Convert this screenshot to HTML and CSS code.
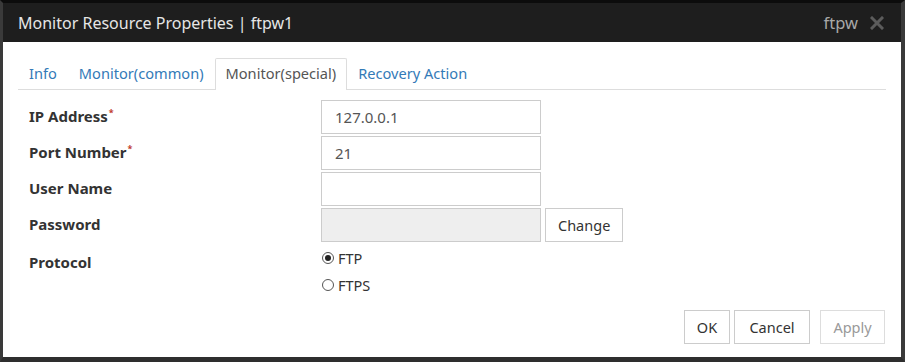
FILE: index.html
```html
<!DOCTYPE html>
<html lang="en">
<head>
    <meta charset="UTF-8">
    <title>Monitor Resource Properties</title>
    <link rel="stylesheet" href="styles.css">
</head>
<body>

<div class="dialog">
    <div class="dialog-header">
        <span class="dialog-title">Monitor Resource Properties | ftpw1</span>
        <span class="dialog-type">ftpw</span>
        <svg class="dialog-close" width="14" height="14" viewBox="0 0 14 14">
            <path d="M2 2 L12 12 M12 2 L2 12" stroke="#5c5c5c" stroke-width="3" stroke-linecap="square"/>
        </svg>
    </div>

    <div class="dialog-body">
        <ul class="tabs">
            <li class="tab">Info</li>
            <li class="tab">Monitor(common)</li>
            <li class="tab active">Monitor(special)</li>
            <li class="tab">Recovery Action</li>
        </ul>

        <div class="form">
            <label class="form-label">IP Address<sup class="req">*</sup></label>
            <div class="form-field"><input type="text" class="text-input" value="127.0.0.1"></div>

            <label class="form-label">Port Number<sup class="req">*</sup></label>
            <div class="form-field"><input type="text" class="text-input" value="21"></div>

            <label class="form-label">User Name</label>
            <div class="form-field"><input type="text" class="text-input" value=""></div>

            <label class="form-label">Password</label>
            <div class="form-field">
                <input type="password" class="text-input disabled" disabled>
                <button class="button">Change</button>
            </div>

            <label class="form-label protocol-label">Protocol</label>
            <div class="radio-group">
                <label class="radio"><span class="radio-dot checked"></span>FTP</label>
                <label class="radio"><span class="radio-dot"></span>FTPS</label>
            </div>
        </div>

        <div class="footer">
            <button class="button ok">OK</button>
            <button class="button cancel">Cancel</button>
            <button class="button apply" disabled>Apply</button>
        </div>
    </div>
</div>

</body>
</html>
```

FILE: styles.css
```css
body {
    margin: 0;
    padding: 0;
    background-color: #333;
    font-family: "Noto Sans", "Liberation Sans", sans-serif;
}
.dialog {
    width: 905px;
    height: 362px;
    box-sizing: border-box;
    border-style: solid;
    border-color: #0c0c0c #3a3a3a #2e2e2e #3a3a3a;
    border-width: 3px 4px 5px 3px;
    background-color: #fff;
    display: flex;
    flex-direction: column;
}
.dialog-header {
    height: 39px;
    background-color: #1e1e1e;
    display: flex;
    align-items: center;
    padding: 0 17px 0 15px;
}
.dialog-title {
    flex: 1;
    color: #e6e6e6;
    font-size: 16px;
}
.dialog-type {
    color: #a8a8a8;
    font-size: 16.5px;
}
.dialog-close {
    margin-left: 12px;
}
.dialog-body {
    flex: 1;
    padding: 16px 15px 0 15px;
    display: flex;
    flex-direction: column;
}
.tabs {
    list-style: none;
    margin: 0;
    padding: 0;
    display: flex;
    border-bottom: 1px solid #ddd;
    height: 31px;
}
.tab {
    padding: 0 10px;
    font-size: 14.6px;
    color: #337ab7;
    line-height: 28px;
    border: 1px solid transparent;
    border-bottom: none;
}
.tab.active {
    color: #555;
    border-color: #ddd;
    background-color: #fff;
    height: 31px;
    border-radius: 2px 2px 0 0;
}
.form {
    display: grid;
    grid-template-columns: 292px auto;
    row-gap: 2px;
    padding: 10px 0 0 11px;
}
.form-label {
    font-size: 15px;
    font-weight: bold;
    color: #333;
    line-height: 32px;
}
.req {
    color: #c0392b;
    font-size: 9px;
    vertical-align: 6px;
    line-height: 0;
    margin-left: 1px;
}
.form-field {
    display: flex;
    gap: 4px;
}
.text-input {
    width: 220px;
    height: 34px;
    box-sizing: border-box;
    border: 1px solid #ccc;
    padding: 0 13px;
    font-family: inherit;
    font-size: 15px;
    color: #555;
    margin: 0;
}
.text-input.disabled {
    background-color: #eee;
    border-color: #ccc;
}
.button {
    height: 34px;
    box-sizing: border-box;
    border: 1px solid #ccc;
    background-color: #fff;
    font-family: inherit;
    font-size: 14.5px;
    color: #333;
    padding: 0 12px;
    margin: 0;
}
.protocol-label {
    margin-top: 2px;
}
.radio-group {
    display: flex;
    flex-direction: column;
}
.radio {
    display: flex;
    align-items: center;
    height: 27px;
    font-size: 14.5px;
    color: #333;
}
.radio-dot {
    width: 12px;
    height: 12px;
    border: 1px solid #555;
    border-radius: 50%;
    box-sizing: border-box;
    margin: 0 4px 0 1px;
    display: flex;
    align-items: center;
    justify-content: center;
}
.radio-dot.checked::after {
    content: "";
    width: 6px;
    height: 6px;
    border-radius: 50%;
    background-color: #222;
}
.footer {
    display: flex;
    justify-content: flex-end;
    padding: 12px 1px 0 0;
}
.ok {
    width: 46px;
    padding: 0;
}
.cancel {
    width: 76px;
    margin-left: 4px;
    padding: 0;
}
.apply {
    width: 65px;
    margin-left: 10px;
    padding: 0;
    color: #999;
    border-color: #ddd;
}
```
